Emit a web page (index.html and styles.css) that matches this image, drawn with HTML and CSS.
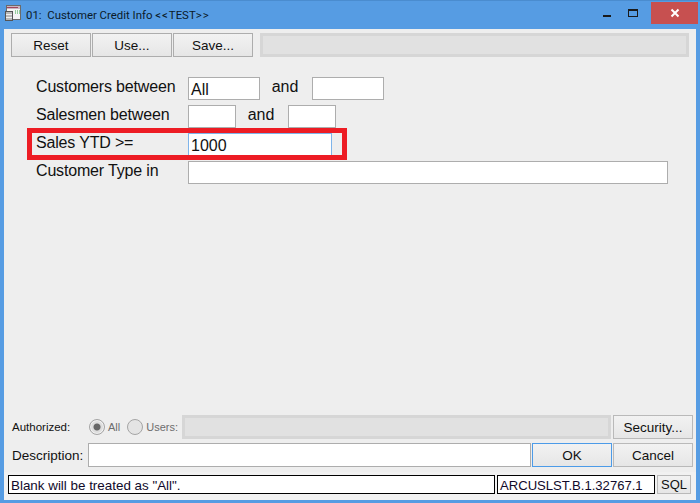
FILE: index.html
```html
<!DOCTYPE html>
<html lang="en">
<head>
<meta charset="utf-8">
<title>Customer Credit Info</title>
<link rel="stylesheet" href="styles.css">
</head>
<body>
<div class="window">
  <header class="titlebar">
    <svg class="app-icon" width="16" height="16" viewBox="0 0 16 16">
      <rect x="1.5" y="0.5" width="14" height="14" fill="#f4f4f4" stroke="#6b6b6b"/>
      <rect x="2" y="1" width="13" height="3" fill="#c9b5c0"/>
      <path d="M2 2.5h11" stroke="#a0455c"/>
      <path d="M10 6h1M12 6h1M14 6h1M10 8h1M12 8h1M14 8h1" stroke="#35a845"/>
      <rect x="0.5" y="6.5" width="7" height="9" fill="#b8b8b8" stroke="#555"/>
      <path d="M1 9.5h6M1 12.5h6" stroke="#eee"/>
    </svg>
    <span class="title">01:&nbsp; Customer Credit Info <span class="angles">&lt;&lt;</span>TEST<span class="angles">&gt;&gt;</span></span>
    <div class="caption">
      <span class="cap-btn"><i class="minimize"></i></span>
      <span class="cap-btn"><i class="maximize"></i></span>
      <span class="cap-close">
        <svg width="10" height="10" viewBox="0 0 10 10"><path d="M1.5 1.5l7 7M8.5 1.5l-7 7" stroke="#fff" stroke-width="2"/></svg>
      </span>
    </div>
  </header>
  <main class="content">
    <div class="toolbar">
      <button class="btn">Reset</button>
      <button class="btn">Use...</button>
      <button class="btn">Save...</button>
      <div class="well toolbar-well"></div>
    </div>
    <div class="form">
      <div class="row">
        <span class="label">Customers between</span>
        <span class="input w72 val-all">All</span>
        <span class="and">and</span>
        <span class="input w72"></span>
      </div>
      <div class="row">
        <span class="label">Salesmen between</span>
        <span class="input w48"></span>
        <span class="and">and</span>
        <span class="input w48"></span>
      </div>
      <div class="row">
        <span class="label">Sales YTD &gt;=</span>
        <span class="input w144 focused">1000</span>
      </div>
      <div class="row">
        <span class="label">Customer Type in</span>
        <span class="input w480"></span>
      </div>
      <div class="highlight"></div>
    </div>
    <div class="bottom">
      <div class="auth-row">
        <span class="auth-label">Authorized:</span>
        <span class="radio checked"></span><span class="radio-text">All</span>
        <span class="radio second"></span><span class="radio-text">Users:</span>
        <div class="well auth-well"></div>
        <button class="btn btn-side">Security...</button>
      </div>
      <div class="desc-row">
        <span class="desc-label">Description:</span>
        <span class="input desc-input"></span>
        <button class="btn btn-ok">OK</button>
        <button class="btn btn-side">Cancel</button>
      </div>
    </div>
    <footer class="status">
      <span class="cell cell-msg">Blank will be treated as "All".</span>
      <span class="cell cell-id">ARCUSLST.B.1.32767.1</span>
      <button class="btn btn-sql">SQL</button>
    </footer>
  </main>
</div>
</body>
</html>
```
FILE: styles.css
```css
* { box-sizing: border-box; }
html, body { margin: 0; padding: 0; }
body { width: 700px; height: 503px; overflow: hidden; background: #569ce3; font-family: "Liberation Sans", Arial, sans-serif; color: #111; }
.window { width: 700px; height: 503px; display: flex; flex-direction: column; border-top: 1px solid #4a8ccf; }
.titlebar { height: 28px; flex: none; display: flex; align-items: flex-start; padding-left: 5px; background: #569ce3; }
.app-icon { margin-top: 4px; flex: none; }
.title { margin: 7px 0 0 5px; font: 11.4px/15px Roboto, sans-serif; color: #0a1a2a; }
.angles { letter-spacing: 1px; }
.caption { margin-left: auto; display: flex; align-items: flex-start; padding-right: 2px; }
.cap-btn { width: 26px; height: 22px; display: flex; justify-content: center; position: relative; }
.minimize { display: block; width: 8px; height: 2px; margin-top: 14px; background: #1a1a1a; }
.maximize { display: block; width: 10px; height: 8px; margin-top: 8px; border: 1px solid #1a1a1a; border-top-width: 2px; }
.cap-close { width: 47px; height: 22px; margin-left: 5px; margin-top: 1px; background: #c75050; display: flex; align-items: center; justify-content: center; }
.content { flex: 1; margin: 0 4px 3px 4px; background: #eee; display: flex; flex-direction: column; }
.btn { display: block; margin: 0; padding: 0; border: 1px solid #b9b9b9; background: linear-gradient(#f2f2f2, #e6e6e6); font: 13.5px "Liberation Sans", Arial, sans-serif; color: #111; }
.toolbar { display: flex; height: 24px; margin: 4px 7px 0 7px; }
.toolbar .btn { width: 80px; margin-right: 1px; border-color: #adadad; }
.well { background: #e1e1e1; border: 3px solid #d6d6d6; }
.toolbar-well { flex: 1; margin-left: 6px; }
.form { position: relative; margin-top: 20px; padding-left: 184px; display: flex; flex-direction: column; gap: 5px; }
.row { display: flex; height: 23px; position: relative; }
.label { position: absolute; left: -152px; top: 0; font-size: 16px; line-height: 20px; letter-spacing: -0.17px; }
.input { display: block; height: 23px; background: #fff; border: 1px solid #adadad; font-size: 16px; line-height: 22px; padding-left: 2px; flex: none; }
.w72 { width: 72px; }
.w48 { width: 48px; }
.w144 { width: 144px; }
.w480 { width: 480px; }
.val-all { line-height: 24px; }
.focused { border-color: #7eb4ea; line-height: 24px; }
.and { width: 52px; padding-right: 2px; text-align: center; font-size: 16px; line-height: 19px; }
.highlight { position: absolute; left: 23px; top: 51px; width: 320px; height: 32px; border: 5px solid #ed1c24; pointer-events: none; }
.bottom { margin-top: auto; padding: 0 3px 0 0; }
.auth-row { display: flex; align-items: center; height: 24px; padding-left: 8px; margin-bottom: 4px; }
.auth-label { width: 77px; font-size: 11.5px; }
.radio { display: block; width: 16px; height: 16px; flex: none; border-radius: 50%; border: 1px solid #a5a5a5; background: #e4e4e4; }
.radio.checked { background: radial-gradient(circle, #666 0 3px, #ddd 4px); box-shadow: inset 0 0 0 1px #f2f2f2; }
.radio.second { margin-left: 7px; }
.radio-text { font-size: 11px; color: #6d6d6d; margin-left: 3px; }
.auth-well { flex: 1; height: 24px; margin-left: 4px; margin-right: 2px; }
.btn-side { width: 80px; height: 24px; flex: none; }
.desc-row { display: flex; align-items: center; height: 24px; padding-left: 8px; }
.desc-label { width: 76px; font-size: 13.5px; }
.desc-input { flex: 1; height: 24px; }
.btn-ok { width: 80px; height: 24px; flex: none; margin: 0 1px; border-color: #4c9be8; }
.status { display: flex; height: 28px; margin-top: 5px; padding: 3px 0 0 4px; background: #f1f1f1; gap: 2px; }
.cell { display: block; height: 19px; background: #fff; border: 1px solid #000; line-height: 19px; padding-left: 2px; color: #110a2a; }
.cell-msg { width: 487px; font-size: 13.4px; }
.cell-id { width: 158px; font-size: 13.1px; }
.btn-sql { width: 34px; height: 19px; font-size: 13px; }
```
